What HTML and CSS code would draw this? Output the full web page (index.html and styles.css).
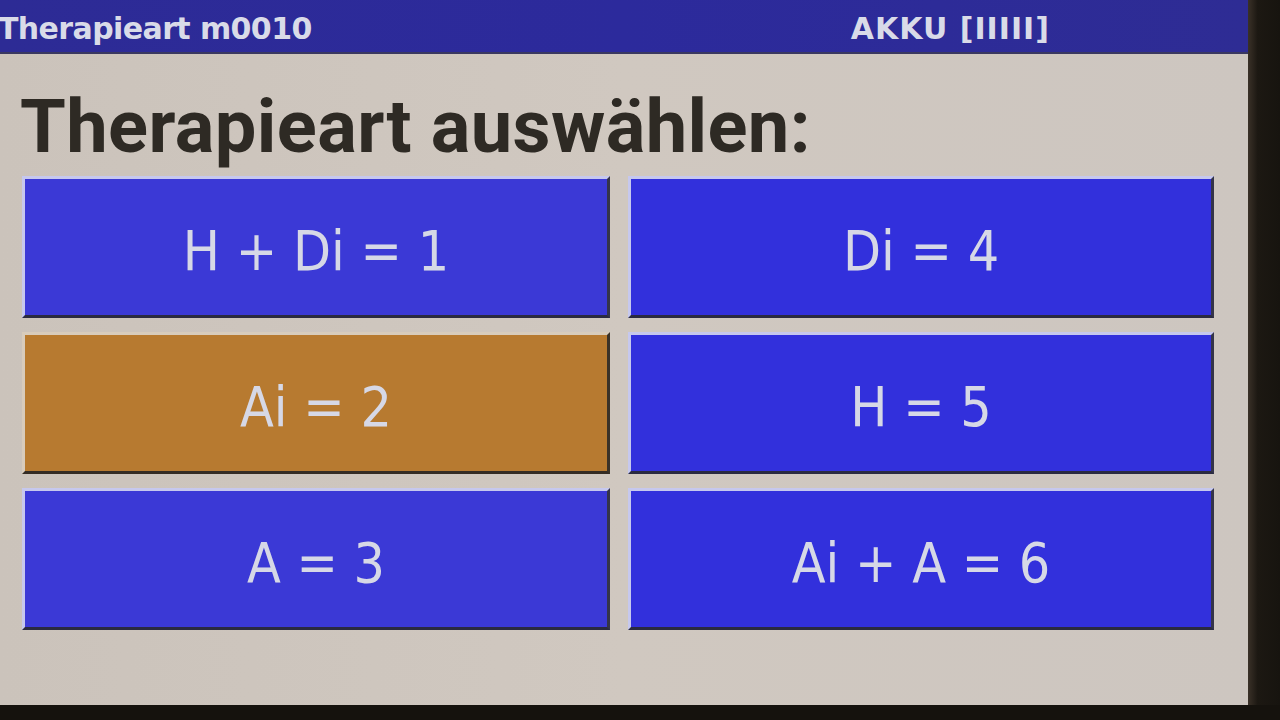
FILE: index.html
```html
<!DOCTYPE html>
<html lang="de">
<head>
<meta charset="utf-8">
<title>Therapieart m0010</title>
<link rel="stylesheet" href="styles.css">
</head>
<body>
<div class="device">
  <div class="screen">
    <header class="topbar">
      <span class="topbar-title">Therapieart m0010</span>
      <span class="topbar-akku">AKKU [IIIII]</span>
    </header>
    <main class="content">
      <h1 class="heading">Therapieart auswählen:</h1>
      <div class="grid">
        <button class="btn">H + Di = 1</button>
        <button class="btn btn-right">Di = 4</button>
        <button class="btn btn-active">Ai = 2</button>
        <button class="btn btn-right">H = 5</button>
        <button class="btn">A = 3</button>
        <button class="btn btn-right">Ai + A = 6</button>
      </div>
    </main>
  </div>
  <div class="bezel-right"></div>
</div>
<div class="bezel-bottom"></div>
</body>
</html>
```

FILE: styles.css
```css
* { box-sizing: border-box; }
html, body {
  margin: 0;
  padding: 0;
  width: 1280px;
  height: 720px;
  overflow: hidden;
  background: #1c1812;
}
.device {
  display: flex;
  height: 705px;
}
.screen {
  width: 1248px;
  height: 705px;
  background: linear-gradient(90deg, #cbc3bb 0%, #d0c8c0 50%, #cdc6c0 100%);
  display: flex;
  flex-direction: column;
}
.bezel-right {
  flex: 1;
  background: linear-gradient(90deg, #3a3128 0%, #1c1812 30%, #17140f 100%);
}
.bezel-bottom {
  height: 15px;
  background: #15120d;
}
.topbar {
  height: 54px;
  background: linear-gradient(90deg, #2d2b95 0%, #2c2a9c 50%, #2e2c94 100%);
  border-bottom: 2px solid #3a3860;
  display: flex;
  align-items: center;
  color: #d9dbe8;
  font-family: "DejaVu Sans", sans-serif;
  font-weight: bold;
  font-size: 30px;
  padding-top: 4px;
}
.topbar-title {
  margin-left: -2px;
  letter-spacing: -0.6px;
}
.topbar-akku {
  margin-left: 539px;
  letter-spacing: 1px;
}
.content {
  padding: 0 0 0 22px;
}
.heading {
  margin: 28px 0 0 -2px;
  font-family: "Roboto", sans-serif;
  font-weight: 700;
  font-size: 74px;
  line-height: 90px;
  color: #2e2a24;
  letter-spacing: 0.4px;
  height: 94px;
}
.grid {
  display: grid;
  grid-template-columns: 588px 586px;
  grid-auto-rows: 142px;
  column-gap: 18px;
  row-gap: 14px;
}
.btn {
  background: #3b39d6;
  border-style: solid;
  border-width: 3px;
  border-color: #c6c8ee #34344a #2a2a40 #c6c8ee;
  color: #d6d8e6;
  font-family: "DejaVu Sans Condensed", "DejaVu Sans", sans-serif;
  font-size: 55px;
  font-weight: normal;
  padding: 8px 0 0 0;
  margin: 0;
  display: flex;
  align-items: center;
  justify-content: center;
}
.btn-right {
  background: #3230dc;
}
.btn-active {
  background: #b77a30;
  border-color: #d8ccbc #3a3228 #342c24 #d8ccbc;
}
```
